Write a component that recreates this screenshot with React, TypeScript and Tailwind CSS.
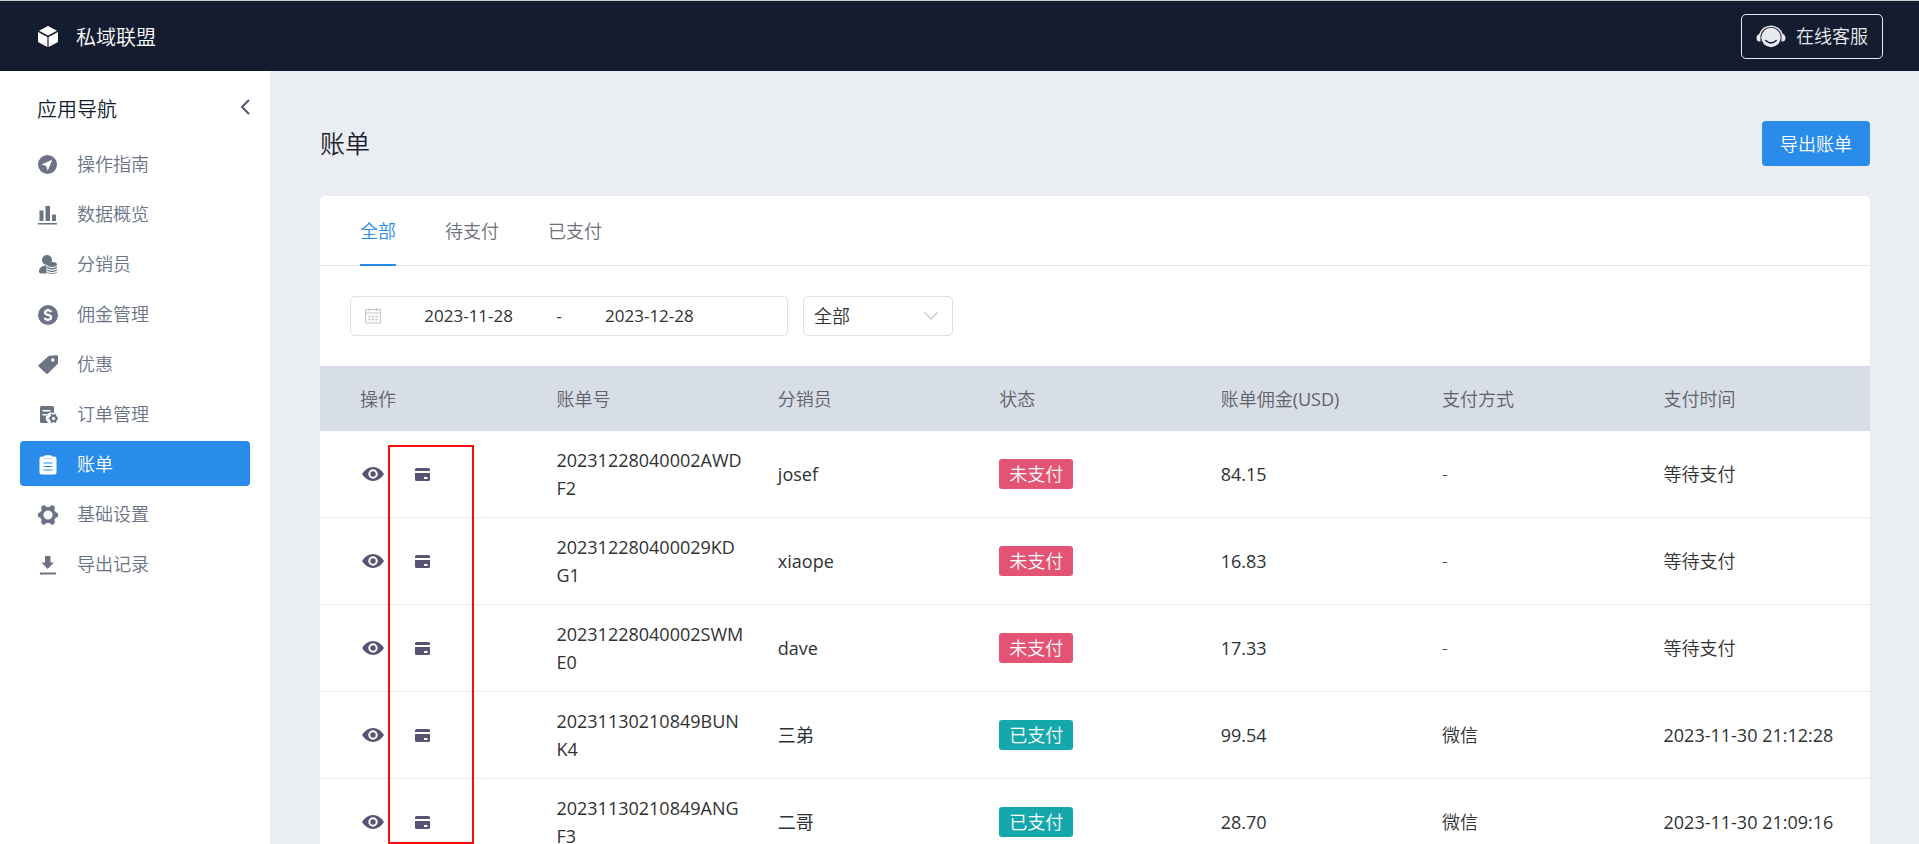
import { useState } from 'react'
import type { ReactNode } from 'react'
import clsx from 'clsx'

function Icon({ children }: { children: ReactNode }) {
  return (
    <svg viewBox="0 0 20 20" className="w-5 h-5 shrink-0" fill="currentColor" aria-hidden="true">
      {children}
    </svg>
  )
}

const GuideIcon = () => (
  <Icon>
    <path fillRule="evenodd" d="M9.5 0a9.5 9.5 0 1 1 0 19a9.5 9.5 0 0 1 0-19zM14.3 4.8L3.6 9.5l4.5 1.6l1.7 4.6z" />
  </Icon>
)

const ChartIcon = () => (
  <Icon>
    <path d="M1.5 5.5h4V16h-4zM7.500 1h4.500v15H7.500zM14 9.500h4V16h-4zM0 18h19v1.500H0z" />
  </Icon>
)

const AgentIcon = () => (
  <Icon>
    <circle cx="9" cy="5" r="5" />
    <path d="M1 16.500C1 13 4 10.500 8.500 10.500V18.500H3Q1 18.500 1 16.500z" />
    <ellipse cx="14" cy="9.500" rx="4.900" ry="2.400" />
    <path d="M9.100 11.600q4.900 3 9.800 0v1.500q-4.900 3-9.800 0zM9.100 14.300q4.900 3 9.800 0v1.300q-4.900 3-9.800 0zM9.100 16.800q4.900 3 9.800 0v.700q-4.900 3.200-9.800 0z" />
  </Icon>
)

const CommissionIcon = () => (
  <Icon>
    <circle cx="10" cy="10" r="10" />
    <path
      d="M13.200 7.200Q12.600 5.300 10 5.300Q7.100 5.300 7.100 7.500Q7.100 9.300 10 9.900Q13.100 10.500 13.100 12.500Q13.100 14.700 10 14.700Q7.200 14.700 6.700 12.700"
      fill="none"
      stroke="#fff"
      strokeWidth="2.200"
    />
    <path d="M9.300 3.800h1.400v2H9.300zM9.300 14.200h1.400v2H9.300z" fill="#fff" />
  </Icon>
)

const CouponIcon = () => (
  <Icon>
    <path
      fillRule="evenodd"
      d="M11 .8L19 .3Q20 .3 20 1.300V8.500L9.700 18.700Q8.900 19.300 8.200 18.600L.6 11.500Q0 10.800.7 10.100zM14.800 3.300a1.700 1.700 0 1 0 0 3.400a1.700 1.700 0 0 0 0-3.400z"
    />
  </Icon>
)

const OrderIcon = () => (
  <Icon>
    <path
      fillRule="evenodd"
      d="M3.500 1h11Q16 1 16 2.500v5.700a5.500 5.500 0 0 0-5.500 9.800H3.500Q2 18 2 16.500V2.500Q2 1 3.500 1zM4.500 5v1.500h8V5zM4.500 9v1.500h5V9z"
    />
    <circle cx="15.500" cy="13.400" r="2.700" fill="none" stroke="currentColor" strokeWidth="2" />
    <path
      d="M13.300 9l1.200 2M17.700 9l-1.200 2M13.300 17.800l1.200-2M17.700 17.800l-1.200-2M10.800 13.400h2M18.200 13.400h2"
      stroke="currentColor"
      strokeWidth="1.800"
    />
  </Icon>
)

const BillIcon = () => (
  <Icon>
    <path
      fillRule="evenodd"
      d="M3.500 1.500H6Q6.400.3 7.500.3h5Q13.600.3 14 1.500h2.500Q18.500 1.500 18.500 3.500v14q0 2-2 2h-13q-2 0-2-2v-14q0-2 2-2zM5.500 7.500v1h9v-1zM5.500 11v1h9v-1zM5.500 14.500v1h9v-1z"
    />
    <path d="M6 2.800q.3 1 1.500 1h5q1.200 0 1.500-1" fill="none" stroke="#298bea" strokeOpacity=".5" strokeWidth=".8" />
  </Icon>
)

const SettingIcon = () => (
  <Icon>
    <path
      fillRule="evenodd"
      d="M4.400.6L6.800.2L8.300 2h3.400L13.200.2L15.600.6L16.900 2.500L16.300 5.200L17.700 7.300L20 8.200V11.800L17.700 12.700L16.300 14.800L16.900 17.500L15.600 19.400L13.200 19.800L11.700 18H8.300L6.800 19.800L4.400 19.400L3.100 17.500L3.700 14.800L2.300 12.700L0 11.800V8.200L2.300 7.300L3.700 5.200L3.100 2.500zM10 5.400a4.600 4.600 0 1 0 0 9.200a4.600 4.600 0 0 0 0-9.200z"
    />
  </Icon>
)

const DownloadIcon = () => (
  <Icon>
    <path d="M7 1h5.500v6.500H16L9.700 14L3.500 7.500H7zM2 17.500h16v2H2z" />
  </Icon>
)

function CubeIcon() {
  return (
    <svg viewBox="0 0 20 21" className="w-5 h-[21px]" fill="currentColor" aria-hidden="true">
      <path d="M10 0L19 4.700L10 9.500L1 4.700zM0 6L9.400 11v10L.8 16.500Q0 16 0 15.200zM20 6V15.200q0 .800-.8 1.300L10.600 21V11z" />
    </svg>
  )
}

function ServiceIcon() {
  return (
    <svg viewBox="0 0 30 24" className="w-[30px] h-6" fill="currentColor" aria-hidden="true">
      <circle cx="15" cy="13.500" r="9.700" />
      <path d="M4 10.500a11.200 10.200 0 0 1 22 0" fill="none" stroke="currentColor" strokeWidth="1.600" />
      <path d="M4.500 9.500v8H3q-2.500-.5-2.500-3.500T3 10zM25.500 9.500v8H27q2.500-.5 2.500-3.500T27 10z" />
      <path d="M9.800 16.500q5.200 4.800 10.400 0" fill="none" stroke="#141c30" strokeWidth="1.500" strokeLinecap="round" />
    </svg>
  )
}

function EyeIcon() {
  return (
    <svg viewBox="0 0 22 14" className="w-[22px] h-3.5" fill="currentColor" aria-hidden="true">
      <path
        fillRule="evenodd"
        d="M0 7Q4.500 0 11 0T22 7Q17.500 14 11 14T0 7zM11 2.300a4.700 4.700 0 1 0 0 9.400a4.700 4.700 0 0 0 0-9.400zM11 4.300a2.700 2.700 0 1 1 0 5.400a2.700 2.700 0 0 1 0-5.400z"
      />
    </svg>
  )
}

function CardIcon() {
  return (
    <svg viewBox="0 0 15 13" className="w-[15px] h-[13px]" fill="currentColor" aria-hidden="true">
      <path fillRule="evenodd" d="M1.500 0h12Q15 0 15 1.500V3H0V1.500Q0 0 1.500 0zM0 5h15v6.500q0 1.500-1.500 1.500h-12Q0 13 0 11.500zM9 9v2h3.500V9z" />
    </svg>
  )
}

function CalendarIcon() {
  return (
    <svg viewBox="0 0 16 16" className="w-4 h-4 shrink-0" fill="none" stroke="currentColor" aria-hidden="true">
      <path d="M.5 1.500h15v13.500H.5zM.5 5h15M4 0v3M12 0v3" />
      <path d="M3.500 8.500h9M3.500 11.500h9" strokeWidth="1.500" strokeDasharray="2 1.500" />
    </svg>
  )
}

const navItems = [
  { label: '操作指南', icon: GuideIcon },
  { label: '数据概览', icon: ChartIcon },
  { label: '分销员', icon: AgentIcon },
  { label: '佣金管理', icon: CommissionIcon },
  { label: '优惠', icon: CouponIcon },
  { label: '订单管理', icon: OrderIcon },
  { label: '账单', icon: BillIcon },
  { label: '基础设置', icon: SettingIcon },
  { label: '导出记录', icon: DownloadIcon },
]

const tabs = ['全部', '待支付', '已支付']

const columns = [
  { title: '操作' },
  { title: '账单号' },
  { title: '分销员' },
  { title: '状态' },
  { title: '账单佣金', unit: '(USD)' },
  { title: '支付方式' },
  { title: '支付时间' },
]

const bills = [
  { no: '20231228040002AWDF2', agent: 'josef', paid: false, amount: '84.15', method: '-', time: '等待支付' },
  { no: '202312280400029KDG1', agent: 'xiaope', paid: false, amount: '16.83', method: '-', time: '等待支付' },
  { no: '20231228040002SWME0', agent: 'dave', paid: false, amount: '17.33', method: '-', time: '等待支付' },
  { no: '20231130210849BUNK4', agent: '三弟', paid: true, amount: '99.54', method: '微信', time: '2023-11-30 21:12:28' },
  { no: '20231130210849ANGF3', agent: '二哥', paid: true, amount: '28.70', method: '微信', time: '2023-11-30 21:09:16' },
]

function Header() {
  return (
    <header className="flex items-center justify-between shrink-0 h-[71px] pl-[38px] pr-9 bg-[#141c30] border-t border-[#c8c8c8] text-white">
      <div className="flex items-center gap-[18px]">
        <CubeIcon />
        <span className="text-[20px] pt-1">私域联盟</span>
      </div>
      <button className="flex items-center gap-[10px] h-[45px] px-[14px] rounded-[5px] border border-[#e8eaee] text-[#e8eaee]">
        <ServiceIcon />
        <span className="text-[18px]">在线客服</span>
      </button>
    </header>
  )
}

function Sidebar() {
  return (
    <aside className="w-[270px] shrink-0 bg-white px-5">
      <div className="flex items-center justify-between h-[70px] pl-[17px]">
        <h2 className="text-[20px] pt-[7px] text-[#141c30]">应用导航</h2>
        <button aria-label="收起" className="pt-[2px] text-[#575373]">
          <svg viewBox="0 0 10 16" className="w-[10px] h-4" fill="none" stroke="currentColor" strokeWidth="2" aria-hidden="true">
            <path d="M9 1L2 8l7 7" />
          </svg>
        </button>
      </div>
      <nav className="flex flex-col gap-[5px]">
        {navItems.map(({ label, icon: ItemIcon }) => (
          <a
            key={label}
            href="#"
            className={clsx(
              'flex items-center gap-[19px] h-[45px] pt-[2px] pl-[18px] rounded-[4px] text-[18px]',
              label === '账单' ? 'bg-[#298bea] text-white' : 'text-[#6b7385]',
            )}
          >
            <ItemIcon />
            {label}
          </a>
        ))}
      </nav>
    </aside>
  )
}

function Filters() {
  return (
    <div className="flex gap-[15px] p-[30px]">
      <div className="flex items-center w-[438px] h-10 px-[14px] rounded-[5px] border border-[#dcdfe6] text-[17px] font-normal text-[#303133]">
        <span className="text-[#c0c4cc]">
          <CalendarIcon />
        </span>
        <input aria-label="开始日期" defaultValue="2023-11-28" className="flex-1 min-w-0 text-center outline-none" />
        <span>-</span>
        <input aria-label="结束日期" defaultValue="2023-12-28" className="flex-1 min-w-0 text-center outline-none" />
        <span className="w-9" />
      </div>
      <div className="relative w-[150px] h-10">
        <select aria-label="状态" className="appearance-none w-full h-full px-[10px] rounded-[5px] border border-[#dcdfe6] bg-white text-[18px] text-[#303133] outline-none">
          <option>全部</option>
          <option>未支付</option>
          <option>已支付</option>
        </select>
        <svg viewBox="0 0 14 8" className="absolute right-[15px] top-4 w-3.5 h-2 text-[#c0c4cc] pointer-events-none" fill="none" stroke="currentColor" strokeWidth="1.200" aria-hidden="true">
          <path d="M.5.5L7 7L13.500.5" />
        </svg>
      </div>
    </div>
  )
}

function BillTable() {
  return (
    <div className="relative">
      <table className="w-full table-fixed border-separate border-spacing-0 text-left text-[18px] leading-7">
        <thead className="bg-[#d8dee8] text-[#606266]">
          <tr className="h-[65px]">
            {columns.map((c) => (
              <th key={c.title} className="px-[15px] first:pl-10 font-[350]">
                {c.title}
                {c.unit && <span className="font-normal">{c.unit}</span>}
              </th>
            ))}
          </tr>
        </thead>
        <tbody className="text-[#303133]">
          {bills.map((b) => (
            <tr key={b.no} className="h-[87px] *:px-[15px] *:border-b *:border-[#ebeef2]">
              <td>
                <div className="flex items-center gap-[31px] pl-[27px] text-[#575373]">
                  <button aria-label="查看"><EyeIcon /></button>
                  <button aria-label="支付"><CardIcon /></button>
                </div>
              </td>
              <td>
                <div className="pr-[3px] break-all font-normal">{b.no}</div>
              </td>
              <td className="font-normal">{b.agent}</td>
              <td>
                <span
                  className={clsx(
                    'block w-fit px-[10px] rounded-[3px] leading-[30px] text-white',
                    b.paid ? 'bg-[#14a8ac]' : 'bg-[#e35374]',
                  )}
                >
                  {b.paid ? '已支付' : '未支付'}
                </span>
              </td>
              <td className="font-normal">{b.amount}</td>
              <td>{b.method}</td>
              <td className={clsx(b.paid && 'font-normal')}>{b.time}</td>
            </tr>
          ))}
        </tbody>
      </table>
      {/* marks the pay column */}
      <div className="absolute left-[68px] top-[79px] w-[86px] h-[399px] border-2 border-[#ff0a0a] pointer-events-none" />
    </div>
  )
}

export default function App() {
  const [tab, setTab] = useState('全部')

  return (
    <div className="flex flex-col h-screen overflow-hidden font-['Open_Sans','Noto_Sans_CJK_SC',sans-serif] font-[350]">
      <Header />
      <div className="flex flex-1 min-h-0">
        <Sidebar />
        <main className="flex-1 min-w-0 overflow-y-auto [scrollbar-width:none] bg-[#eaedf2] pl-[50px] pr-[49px] pt-[50px]">
          <div className="flex items-center justify-between mb-[30px]">
            <h1 className="text-[25px] text-[#1e1e2d]">账单</h1>
            <button className="h-[45px] px-[18px] pt-[2px] rounded-[4px] bg-[#298bea] text-[18px] text-white">导出账单</button>
          </div>
          <section className="rounded-[5px] bg-white">
            <div className="flex gap-[49px] px-10 h-[70px] border-b border-[#e4e7ed]">
              {tabs.map((t) => (
                <button
                  key={t}
                  onClick={() => setTab(t)}
                  className={clsx(
                    'h-[70px] pt-[2px] text-[18px] border-b-2',
                    t === tab ? 'border-[#298bea] text-[#298bea]' : 'border-transparent text-[#6b7078]',
                  )}
                >
                  {t}
                </button>
              ))}
            </div>
            <Filters />
            <BillTable />
          </section>
        </main>
      </div>
    </div>
  )
}
